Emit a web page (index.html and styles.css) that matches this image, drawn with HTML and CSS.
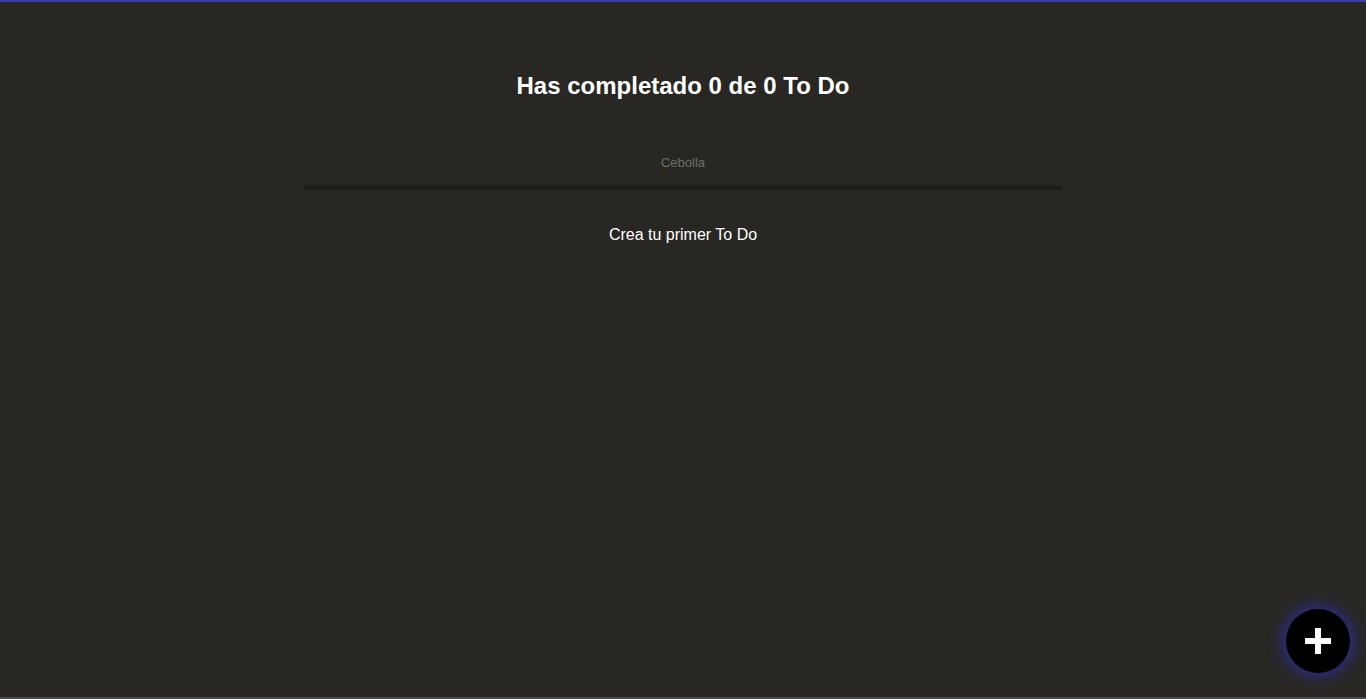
FILE: index.html
```html
<!DOCTYPE html>
<html lang="es">
<head>
<meta charset="utf-8">
<title>To Do</title>
<link rel="stylesheet" href="styles.css">
</head>
<body>
<main class="app">
  <h1 class="counter">Has completado 0 de 0 To Do</h1>
  <input class="search" type="text" placeholder="Cebolla">
  <p class="empty">Crea tu primer To Do</p>
</main>
<button class="fab" aria-label="Crear To Do">
  <svg width="26" height="26" viewBox="0 0 26 26"><path d="M10 0h6v10h10v6H16v10h-6V16H0v-6h10z" fill="#fff"/></svg>
</button>
</body>
</html>
```
FILE: styles.css
```css
html, body {
  margin: 0;
  height: 100%;
}
body {
  background: #282723;
  border-top: 2px solid #3d3db3;
  border-bottom: 2px solid #4a4a48;
  box-sizing: border-box;
  font-family: "Liberation Sans", Arial, sans-serif;
  color: #fff;
  overflow: hidden;
}
.app {
  display: flex;
  flex-direction: column;
  align-items: center;
}
.counter {
  margin: 70px 0 0;
  font-size: 24px;
  line-height: 28px;
  font-weight: bold;
}
.search {
  margin-top: 47px;
  width: 758px;
  height: 43px;
  box-sizing: border-box;
  background: transparent;
  border: none;
  border-bottom: 5px solid #1f1e1b;
  text-align: center;
  font-family: "Liberation Sans", Arial, sans-serif;
  font-size: 13px;
  color: #ccc;
  outline: none;
  padding: 0 0 8px;
}
.search::placeholder {
  color: #6e6d69;
}
.empty {
  margin: 35px 0 0;
  font-size: 16px;
  line-height: 20px;
}
.fab {
  position: fixed;
  right: 16px;
  bottom: 26px;
  width: 64px;
  height: 64px;
  border-radius: 50%;
  background: #000;
  border: none;
  display: flex;
  align-items: center;
  justify-content: center;
  box-shadow: 0 0 16px 3px rgba(50, 50, 220, 0.6);
  padding: 0;
}
```
